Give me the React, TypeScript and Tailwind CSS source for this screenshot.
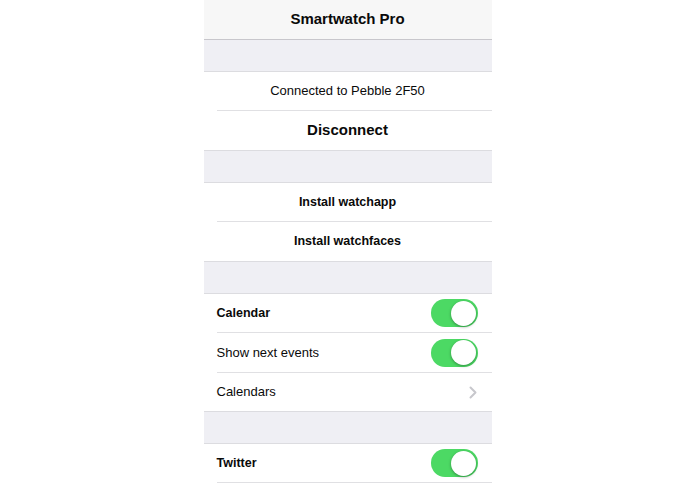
import React from "react";

const font = { fontFamily: '"Liberation Sans", Arial, Helvetica, sans-serif' };

function Toggle() {
  return (
    <div className="relative h-[28px] w-[47px] rounded-full bg-[#4cd964]">
      <div className="absolute right-[1.5px] top-[1.5px] h-[25px] w-[25px] rounded-full bg-white shadow-[0_1px_3px_rgba(0,0,0,0.35)]" />
    </div>
  );
}

function Chevron() {
  return (
    <svg width="8" height="13" viewBox="0 0 8 13" className="mr-[1px]">
      <polyline points="1.5,1.5 6.5,6.5 1.5,11.5" fill="none" stroke="#c7c7cc" strokeWidth="2" strokeLinecap="round" strokeLinejoin="round" />
    </svg>
  );
}

function Gap() {
  return <div className="h-[31px] bg-[#efeff4]" />;
}

function Sep() {
  return (
    <div className="flex h-px">
      <div className="w-[13px] bg-white" />
      <div className="flex-1 bg-[#e0e0e3]" />
    </div>
  );
}

function Border() {
  return <div className="h-px bg-[#dcdce0]" />;
}

export default function App() {
  return (
    <div className="min-h-[494px] w-full bg-white text-[#0a0a0a]" style={font}>
      <div className="mx-auto w-[288px]">
        <div className="flex h-[39px] items-center justify-center bg-[#f7f7f7] text-[15px] font-bold">
          Smartwatch Pro
        </div>
        <div className="h-px bg-[#c8c7cc]" />
        <Gap />
        <Border />
        <div className="flex h-[38px] items-center justify-center text-[13px]">Connected to Pebble 2F50</div>
        <Sep />
        <div className="flex h-[39px] items-center justify-center text-[15px] font-bold">Disconnect</div>
        <Border />
        <Gap />
        <Border />
        <div className="flex h-[38px] items-center justify-center text-[12.5px] font-bold">Install watchapp</div>
        <Sep />
        <div className="flex h-[39px] items-center justify-center text-[12.5px] font-bold">Install watchfaces</div>
        <Border />
        <Gap />
        <Border />
        <div className="flex h-[38px] items-center justify-between pl-[13px] pr-[14px]">
          <span className="text-[12.5px] font-bold">Calendar</span>
          <Toggle />
        </div>
        <Sep />
        <div className="flex h-[39px] items-center justify-between pl-[13px] pr-[14px]">
          <span className="text-[13px]">Show next events</span>
          <Toggle />
        </div>
        <Sep />
        <div className="flex h-[38px] items-center justify-between pl-[13px] pr-[14px]">
          <span className="text-[13px]">Calendars</span>
          <Chevron />
        </div>
        <Border />
        <Gap />
        <Border />
        <div className="flex h-[38px] items-center justify-between pl-[13px] pr-[14px]">
          <span className="text-[12.5px] font-bold">Twitter</span>
          <Toggle />
        </div>
        <Sep />
      </div>
    </div>
  );
}
